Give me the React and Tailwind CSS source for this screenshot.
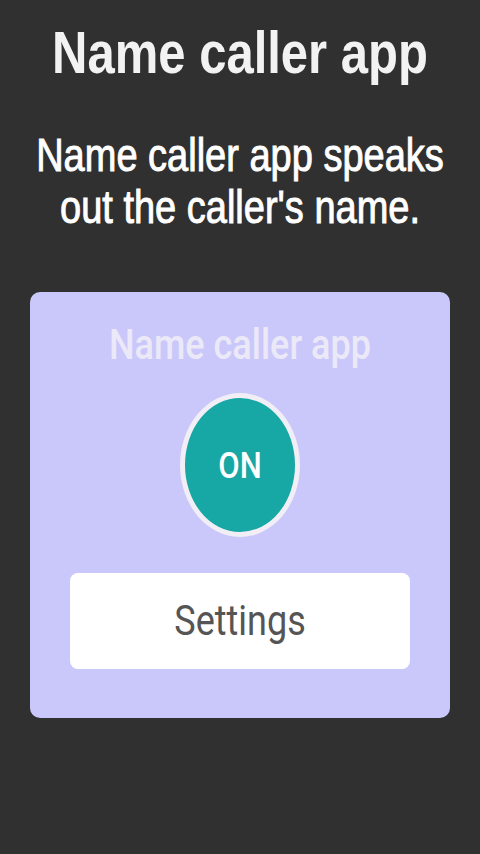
const App = () => {
	return (
		<div className="min-h-[854px] w-full bg-[#303030] flex flex-col font-['Liberation_Sans',Arial,sans-serif]">

			{/* Heading */}
			<div className="mt-[23px] h-[60px] flex items-center justify-center">
				<h1 className="scale-y-[1.2] text-[49px] leading-none font-bold text-[#f2f2f2]">
					Name caller app
				</h1>
			</div>

			{/* Description */}
			<p className="mt-[56px] h-[87px] scale-y-[1.2] text-center text-[38px] leading-[43.3px] text-white [-webkit-text-stroke:0.8px_white]">
				Name caller app speaks
				<br />
				out the caller's name.
			</p>

			{/* Card */}
			<div className="mt-[66px] mx-[30px] h-[426px] rounded-[10px] bg-[#cac8fa] flex flex-col items-center pt-[31px] font-['Roboto',sans-serif]">
				<div className="h-[44px] flex items-center">
					<span className="scale-y-[1.2] text-[36px] leading-[44px] font-medium text-[#ebe8f8]">
						Name caller app
					</span>
				</div>

				<button className="mt-[26px] w-[120px] h-[144px] rounded-[50%] border-[5px] border-[#f2eef6] bg-[#17a7a4] flex items-center justify-center">
					<span className="scale-y-[1.2] text-[31px] leading-none font-medium text-white">ON</span>
				</button>

				<button className="mt-[36px] w-[340px] h-[96px] rounded-[8px] bg-white flex items-center justify-center">
					<span className="scale-y-[1.2] text-[36px] leading-none text-[#555555]">Settings</span>
				</button>
			</div>

		</div>
	)
}

export default App
